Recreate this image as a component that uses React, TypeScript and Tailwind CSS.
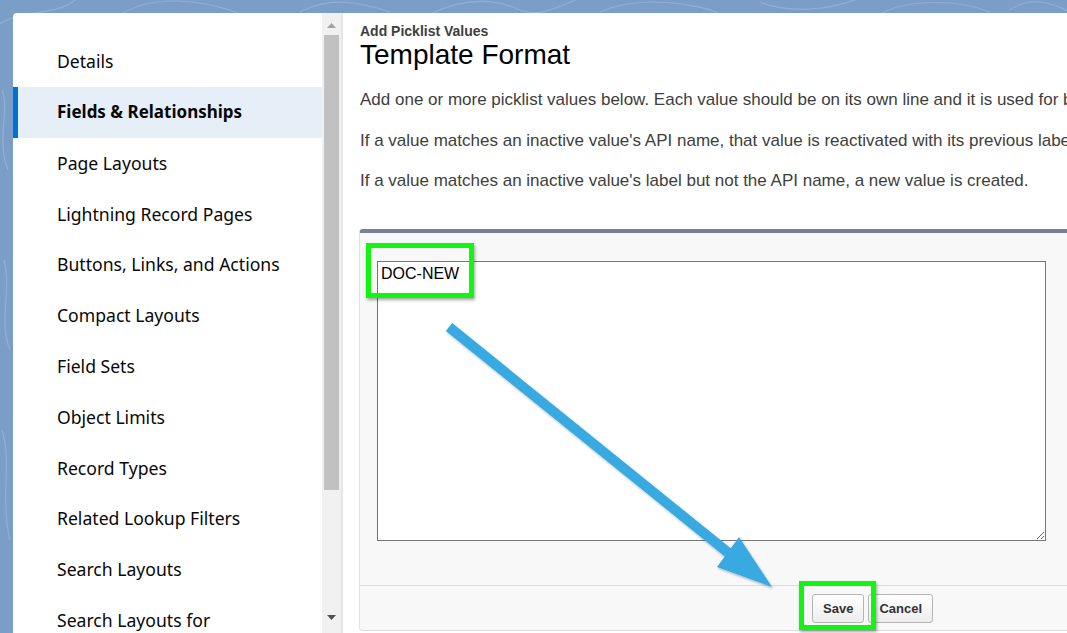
import React from 'react';

const navItems = [
  'Details',
  'Fields & Relationships',
  'Page Layouts',
  'Lightning Record Pages',
  'Buttons, Links, and Actions',
  'Compact Layouts',
  'Field Sets',
  'Object Limits',
  'Record Types',
  'Related Lookup Filters',
  'Search Layouts',
  'Search Layouts for',
];

const active = 'Fields & Relationships';

function Backdrop() {
  // faint contour swirls on the blue header background
  return (
    <svg className="absolute inset-0" width="1067" height="633" viewBox="0 0 1067 633" fill="none">
      <g stroke="#9ab7da" strokeWidth="1.2" opacity="0.7">
        <path d="M-10 30 C 20 5, 60 20, 80 -5" />
        <path d="M120 15 C 150 -5, 200 -2, 240 14" />
        <path d="M300 12 C 330 -4, 360 2, 390 12" />
        <path d="M430 14 C 460 0, 490 -4, 520 10 C 540 18, 560 6, 580 -2" />
        <path d="M600 12 C 640 -6, 700 4, 720 14" />
        <path d="M760 2 C 790 14, 830 10, 860 -2" />
        <path d="M880 14 C 910 -2, 960 0, 990 12" />
        <path d="M1010 10 C 1030 -4, 1050 2, 1070 12" />
        <path d="M2 90 C 10 110, -4 140, 8 170" />
        <path d="M4 260 C 12 290, -2 320, 10 350" />
        <path d="M2 430 C 12 460, 0 500, 10 540" />
      </g>
    </svg>
  );
}

function Scrollbar() {
  return (
    <div className="flex w-[19px] flex-col bg-[#f1f1f1]">
      <div className="flex h-[22px] items-center justify-center pt-[2px]">
        <svg width="9" height="5" viewBox="0 0 9 5">
          <path d="M0 5 L4.5 0 L9 5 Z" fill="#a3a3a3" />
        </svg>
      </div>
      <div className="mx-[2px] h-[455px] bg-[#c1c1c1]" />
      <div className="flex-1" />
      <div className="flex h-[22px] items-start justify-center pt-[4px]">
        <svg width="9" height="5" viewBox="0 0 9 5">
          <path d="M0 0 L9 0 L4.5 5 Z" fill="#505050" />
        </svg>
      </div>
    </div>
  );
}

function Sidebar() {
  return (
    <div className="flex h-full w-[328px] overflow-hidden rounded-tl-[4px] bg-white">
      <ul className="w-[309px] pt-[23px] font-['Noto_Sans',sans-serif] text-[#080707]">
        {navItems.map(item => {
          const on = item === active;
          return (
            <li
              key={item}
              className={
                on
                  ? 'flex h-[50.8px] items-center border-l-[5px] border-[#0070d2] bg-[#e6eef8] pl-[39px] text-[17px] font-bold'
                  : 'flex h-[50.8px] items-center pl-[44px] text-[17.6px]'
              }
            >
              {item}
            </li>
          );
        })}
      </ul>
      <Scrollbar />
    </div>
  );
}

function Button({ label }: { label: string }) {
  return (
    <button className="h-[29px] rounded-[3px] border border-[#b5b5b5] bg-gradient-to-b from-white to-[#ededed] px-[10px] font-['Liberation_Sans',Arial,sans-serif] text-[13px] font-bold text-[#333]">
      {label}
    </button>
  );
}

function Main() {
  return (
    <div className="h-full flex-1 overflow-hidden border-l-2 border-[#e6e6e6] bg-white font-['Liberation_Sans',Arial,sans-serif]">
      <div className="pl-[17px] pt-[10px]">
        <div className="text-[14px] font-bold leading-[16px] text-[#3e3e3c]">Add Picklist Values</div>
        <h1 className="text-[28px] leading-[32px] text-[#000]">Template Format</h1>
        <div className="mt-[19px] flex flex-col gap-[20.5px] whitespace-nowrap text-[17px] leading-[20px] text-[#3e3e3c]">
          <p>Add one or more picklist values below. Each value should be on its own line and it is used for both the label and API name.</p>
          <p>If a value matches an inactive value's API name, that value is reactivated with its previous label.</p>
          <p>If a value matches an inactive value's label but not the API name, a new value is created.</p>
        </div>
      </div>

      <div className="ml-[16px] mt-[38px] w-[760px] rounded-t-[4px] rounded-bl-[4px] border-t-[4px] border-l border-b border-t-[#76829a] border-l-[#e2e2e2] border-b-[#dddddd] bg-[#f8f8f8]">
        <div className="pl-[17px] pt-[28px]">
          <textarea
            readOnly
            defaultValue="DOC-NEW"
            className="block h-[280px] w-[669px] border border-[#767676] bg-white px-[3px] pt-[3px] text-[16px] leading-[18px] text-[#000] outline-none"
          />
        </div>
        <div className="mt-[44px] flex h-[45px] gap-[4px] border-t border-[#dddddd] pl-[452px] pt-[8px]">
          <Button label="Save" />
          <Button label="Cancel" />
        </div>
      </div>
    </div>
  );
}

function Annotations() {
  return (
    <>
      <div className="absolute left-[366px] top-[243px] h-[55px] w-[108px] border-[5px] border-[#11f511] shadow-[1px_2px_3px_rgba(0,0,0,0.35)]" />
      <div className="absolute left-[799px] top-[581px] h-[49px] w-[77px] border-[5px] border-[#11f511] shadow-[1px_2px_3px_rgba(0,0,0,0.35)]" />
      <svg className="absolute left-0 top-0" width="1067" height="633" viewBox="0 0 1067 633">
        <defs>
          <filter id="sh" x="-10%" y="-10%" width="120%" height="120%">
            <feDropShadow dx="1" dy="1.5" stdDeviation="1.2" floodColor="#000" floodOpacity="0.3" />
          </filter>
        </defs>
        <g filter="url(#sh)" fill="#39a9e1">
          <line x1="449" y1="327" x2="731" y2="555" stroke="#39a9e1" strokeWidth="10" />
          <polygon points="717,567 739,537 772,587" />
        </g>
      </svg>
    </>
  );
}

export default function App() {
  return (
    <div className="relative h-[633px] w-[1067px] overflow-hidden bg-[#7b9ec9]">
      <Backdrop />
      <div className="relative flex h-full pl-[13px] pt-[13px]">
        <Sidebar />
        <Main />
      </div>
      <Annotations />
    </div>
  );
}
